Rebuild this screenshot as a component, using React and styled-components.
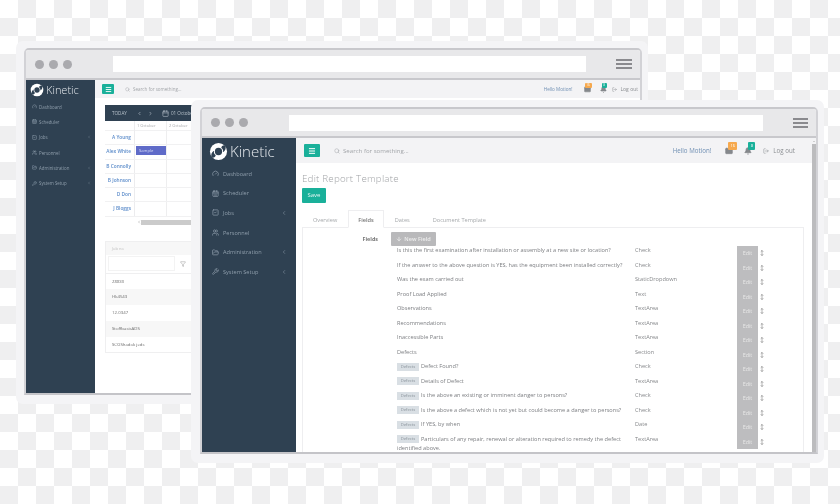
import React from 'react';
import styled, { createGlobalStyle } from 'styled-components';
import {
  Gauge, CalendarDays, SquareCheck, Users, FolderOpen, Wrench, ChevronLeft, ChevronRight,
  Search, Menu, Mail, Bell, LogOut, MoveVertical, ArrowDown, Filter, Calendar
} from 'lucide-react';

const GlobalStyle = createGlobalStyle`
  html, body { margin: 0; padding: 0; background: #fff; }
  body { font-family: "Open Sans", "Liberation Sans", sans-serif; }
`;

const Desktop = styled.div`
  position: relative;
  width: 840px;
  height: 504px;
  overflow: hidden;
  background-color: #fff;
  background-image: conic-gradient(#efeff0 25%, #fff 0 50%, #efeff0 0 75%, #fff 0);
  background-size: 36px 36px;
  filter: blur(0.45px);
`;

const Frame = styled.div`
  position: absolute;
  left: ${p => p.$left}px;
  top: ${p => p.$top}px;
  width: ${p => p.$width}px;
  height: ${p => p.$height}px;
  box-sizing: border-box;
  padding: 7px 6px 9px ${p => p.$padLeft}px;
  background: #f4f4f6;
  border-radius: 7px;
`;

const Chrome = styled.div`
  height: 100%;
  box-sizing: border-box;
  display: flex;
  flex-direction: column;
  border: 2px solid #d2d2d6;
  border-top-color: #c8c8cc;
  border-bottom-color: #c4c4c8;
  border-radius: 5px 5px 0 0;
  overflow: hidden;
  background: #fff;
`;

const TitleBar = styled.div`
  flex: 0 0 ${p => p.$height}px;
  box-sizing: border-box;
  display: flex;
  align-items: center;
  padding: 0 8px 0 ${p => p.$padLeft}px;
  background: #e8e8ea;
  border-bottom: 2px solid #c8c8cc;
`;

const Dots = styled.div`
  display: flex;
  gap: ${p => p.$gap}px;
  width: ${p => p.$width}px;
`;

const Dot = styled.span`
  width: ${p => p.$size}px;
  height: ${p => p.$size}px;
  border-radius: 50%;
  background: #aaaaae;
`;

const UrlBar = styled.div`
  width: ${p => p.$width}px;
  height: 16px;
  background: #fff;
`;

const Burger = styled.div`
  margin-left: ${p => p.$gap}px;
  width: ${p => p.$width}px;
  display: flex;
  flex-direction: column;
  gap: ${p => p.$lineGap}px;
  span { display: block; height: 2px; background: #8a8a8e; }
`;

const AppBody = styled.div`
  flex: 1;
  min-height: 0;
  display: flex;
`;

const Sidebar = styled.nav`
  flex: 0 0 ${p => p.$width}px;
  background: #2f4152;
`;

const Brand = styled.div`
  height: ${p => p.$height}px;
  display: flex;
  align-items: center;
  padding-left: ${p => p.$padLeft}px;
  gap: ${p => p.$gap}px;
  color: #e4e8ec;
  font-family: "Open Sans", sans-serif;
  font-weight: 300;
  font-size: ${p => p.$font}px;
`;

const NavItem = styled.div`
  height: ${p => p.$height}px;
  display: flex;
  align-items: center;
  padding: 0 ${p => p.$padRight}px 0 ${p => p.$padLeft}px;
  gap: ${p => p.$gap}px;
  color: #8f9eac;
  font-size: ${p => p.$font}px;
  span { flex: 1; }
`;

const Main = styled.div`
  flex: 1;
  min-width: 0;
  display: flex;
  flex-direction: column;
  position: relative;
`;

const TopBar = styled.div`
  flex: 0 0 ${p => p.$height}px;
  box-sizing: border-box;
  display: flex;
  align-items: center;
  padding: 0 ${p => p.$padRight}px 0 ${p => p.$padLeft}px;
  background: #f3f3f5;
`;

const Toggle = styled.div`
  width: ${p => p.$width}px;
  height: ${p => p.$height}px;
  display: flex;
  align-items: center;
  justify-content: center;
  background: #1ab09a;
  color: #fff;
  border-radius: 1px;
`;

const SearchBox = styled.div`
  margin-left: ${p => p.$gap}px;
  flex: 1;
  display: flex;
  align-items: center;
  gap: 3px;
  color: #a3a6aa;
  font-size: ${p => p.$font}px;
`;

const Hello = styled.span`
  color: #6f8fb3;
  font-size: ${p => p.$font}px;
`;

const IconBadge = styled.span`
  position: relative;
  display: inline-flex;
  margin-left: ${p => p.$gap}px;
  color: #85888c;
`;

const Badge = styled.span`
  position: absolute;
  left: ${p => p.$left}px;
  top: ${p => p.$top}px;
  min-width: ${p => p.$width}px;
  height: ${p => p.$height}px;
  display: flex;
  align-items: center;
  justify-content: center;
  border-radius: 1px;
  background: ${p => p.$color};
  color: #fff;
  font-size: ${p => p.$font}px;
`;

const LogOutLink = styled.span`
  margin-left: ${p => p.$gap}px;
  display: inline-flex;
  align-items: center;
  gap: ${p => p.$inner}px;
  color: #8b8e92;
  font-size: ${p => p.$font}px;
  white-space: nowrap;
`;

/* back window */
const CalendarWrap = styled.div`
  padding: 7px 0 0 10px;
  width: 300px;
`;

const CalendarBar = styled.div`
  height: 16px;
  display: flex;
  align-items: center;
  padding-left: 7px;
  background: #2f4152;
  color: #b6c0ca;
  font-size: 4.6px;
  white-space: nowrap;
`;

const BarArrows = styled.span`
  margin: 0 0 0 10px;
  display: inline-flex;
  align-items: center;
  gap: 6px;
`;

const CalendarDate = styled.span`
  margin-left: 9px;
  display: inline-flex;
  align-items: center;
  gap: 2px;
`;

const CalRow = styled.div`
  display: grid;
  grid-template-columns: 30px 32px 32px;
  box-sizing: border-box;
  height: ${p => p.$height}px;
  border-bottom: 1px solid #f1f1f2;
`;

const Person = styled.div`
  padding-right: 3px;
  text-align: right;
  color: #5c8cca;
  font-size: 4.8px;
  font-weight: 600;
  line-height: 13px;
  white-space: nowrap;
  border-right: 1px solid #ececee;
  direction: rtl;
`;

const CalCell = styled.div`
  border-right: 1px solid #eeeeef;
  color: #a5a7aa;
  font-size: 4px;
  line-height: 10px;
  padding-left: 2px;
  white-space: nowrap;
  position: relative;
`;

const EventBar = styled.div`
  position: absolute;
  left: 1px;
  right: 0;
  top: 1px;
  height: 9px;
  background: #5f6bc8;
  color: #d7dbf5;
  font-size: 4.2px;
  line-height: 9px;
  padding-left: 3px;
`;

const HScroll = styled.div`
  margin: 3px 0 0 32px;
  display: flex;
  align-items: center;
  color: #9a9a9a;
  div { width: 60px; height: 5px; background: #cbcbcb; }
`;

const JobTable = styled.div`
  margin-top: 16px;
  border: 1px solid #efeff0;
  border-right: none;
`;

const JobHead = styled.div`
  height: 13px;
  padding-left: 6px;
  background: #f7f7f7;
  color: #c0c0c0;
  font-size: 4px;
  line-height: 13px;
`;

const JobFilter = styled.div`
  height: 19px;
  box-sizing: border-box;
  display: flex;
  align-items: center;
  padding-left: 2px;
  gap: 5px;
  color: #999;
  border-bottom: 1px solid #efeff0;
  div { width: 67px; height: 15px; background: #fff; border: 1px solid #f3f3f3; box-sizing: border-box; }
`;

const JobRow = styled.div`
  height: 15.7px;
  padding-left: 6px;
  background: ${p => (p.$striped ? '#f7f7f7' : '#fff')};
  color: #6c6c6c;
  font-size: 4.3px;
  line-height: 15.7px;
`;

/* front window */
const Content = styled.div`
  flex: 1;
  min-height: 0;
  padding: 0 8px 0 6px;
  margin-right: 4px;
  overflow: hidden;
`;

const PageTitle = styled.h2`
  margin: 8px 0 2px;
  color: #a2a4a7;
  font-size: 9.8px;
  font-weight: 300;
  line-height: 15px;
  letter-spacing: 0.2px;
`;

const SaveButton = styled.div`
  width: 24px;
  height: 15px;
  background: #1ab09a;
  color: #e4f6f3;
  font-size: 6px;
  line-height: 15px;
  text-align: center;
  border-radius: 1px;
`;

const Tabs = styled.div`
  margin-top: 6px;
  display: flex;
  align-items: flex-end;
  height: 18px;
  padding-left: 3px;
  font-size: 5.6px;
  color: #a5a8ab;
`;

const Tab = styled.div`
  height: 18px;
  box-sizing: border-box;
  margin-right: ${p => p.$gap}px;
  padding: 0 ${p => p.$pad}px;
  line-height: 18px;
  white-space: nowrap;
  position: relative;
  top: 1px;
  color: ${p => (p.$active ? '#777' : '#a5a8ab')};
  background: ${p => (p.$active ? '#fff' : 'transparent')};
  border: 1px solid ${p => (p.$active ? '#eeeef0' : 'transparent')};
  border-bottom-color: ${p => (p.$active ? '#fff' : 'transparent')};
  font-weight: ${p => (p.$active ? 600 : 400)};
`;

const Panel = styled.div`
  border: 1px solid #eeeef0;
  border-bottom: none;
  height: 230px;
`;

const FieldsHead = styled.div`
  height: 18px;
  display: flex;
  align-items: center;
  padding-top: 4px;
  box-sizing: border-box;
`;

const FieldsLabel = styled.div`
  width: 75px;
  text-align: right;
  color: #777;
  font-size: 5.4px;
  font-weight: 700;
`;

const NewField = styled.div`
  margin-left: 13px;
  width: 45px;
  height: 14px;
  display: flex;
  align-items: center;
  justify-content: center;
  gap: 2px;
  background: #b9b9bb;
  color: #eee;
  font-size: 5.6px;
  font-weight: 600;
  border-radius: 1px;
`;

const FieldList = styled.div`
  padding-left: 94px;
`;

const FieldRow = styled.div`
  display: grid;
  grid-template-columns: 238px 102px 21px 8px;
  height: 14.5px;
`;

const FieldLabel = styled.div`
  color: #7c7e82;
  font-size: 5.6px;
  line-height: 9px;
  white-space: nowrap;
`;

const FieldType = styled.div`
  color: #85878a;
  font-size: 5.6px;
  line-height: 9px;
`;

const DefectTag = styled.span`
  display: inline-block;
  width: 22px;
  height: 8px;
  margin: 0.5px 2px 0 0;
  background: #d9dfe4;
  color: #8b949c;
  font-size: 4.2px;
  line-height: 8px;
  text-align: center;
  vertical-align: top;
`;

const EditButton = styled.div`
  height: 14.5px;
  background: #bdbdbf;
  color: #e8e8e8;
  font-size: 5.4px;
  line-height: 14.5px;
  text-align: center;
`;

const Sorter = styled.div`
  display: flex;
  justify-content: center;
  align-items: center;
  color: #808080;
  height: 14.5px;
`;

const Scrollbar = styled.div`
  position: absolute;
  right: 0;
  top: 6px;
  bottom: 0;
  width: 4px;
  background: #bcbcbe;

  &::before {
    content: "";
    position: absolute;
    left: 0.5px;
    top: -4px;
    border: 1.5px solid transparent;
    border-bottom-color: #aaa;
  }
`;

const Swirl = ({ size }) => (
  <svg width={size} height={size} viewBox="0 0 24 24" fill="none">
    <circle cx="12" cy="12" r="10.8" fill="#fff" />
    <circle cx="12" cy="12" r="4.6" fill="#2f4152" />
    <path d="M20.5 4.500C18 3.600 16 5 15.500 7.400 17.500 8.800 18.300 11 17.600 13 20.500 11.500 22 8 20.500 4.500Z" fill="#2f4152" />
    <path d="M3.500 19.500C6 20.400 8 19 8.500 16.600 6.500 15.200 5.700 13 6.400 11 3.500 12.500 2 16 3.500 19.500Z" fill="#2f4152" />
  </svg>
);

const NAV = [
  ['Dashboard', Gauge, false],
  ['Scheduler', CalendarDays, false],
  ['Jobs', SquareCheck, true],
  ['Personnel', Users, false],
  ['Administration', FolderOpen, true],
  ['System Setup', Wrench, true]
];

const SideNav = ({ w, brandH, brandPad, brandGap, brandFont, logo, item, pad, padRight, gap, font, icon }) => (
  <Sidebar $width={w}>
    <Brand $height={brandH} $padLeft={brandPad} $gap={brandGap} $font={brandFont}>
      <Swirl size={logo} />
      Kinetic
    </Brand>
    {NAV.map(([label, Icon, more]) => (
      <NavItem key={label} $height={item} $padLeft={pad} $padRight={padRight} $gap={gap} $font={font}>
        <Icon size={icon} strokeWidth={2.4} />
        <span>{label}</span>
        {more && <ChevronLeft size={icon - 1} />}
      </NavItem>
    ))}
  </Sidebar>
);

const PEOPLE = ['A Young', 'Alex White', 'B Connolly', 'B Johnson', 'D Don', 'J Bloggs'];
const JOBS = ['28830', 'Hk4543', '12-0347', 'StoffbasisADS', 'SCOShadok jeds'];

const FIELDS = [
  { label: 'Is this the first examination after installation or assembly at a new site or location?', type: 'Check' },
  { label: 'If the answer to the above question is YES, has the equipment been installed correctly?', type: 'Check' },
  { label: 'Was the exam carried out', type: 'StaticDropdown' },
  { label: 'Proof Load Applied', type: 'Text' },
  { label: 'Observations', type: 'TextArea' },
  { label: 'Recommendations', type: 'TextArea' },
  { label: 'Inaccessible Parts', type: 'TextArea' },
  { label: 'Defects', type: 'Section' },
  { label: 'Defect Found?', type: 'Check', tag: true },
  { label: 'Details of Defect', type: 'TextArea', tag: true },
  { label: 'Is the above an existing or imminent danger to persons?', type: 'Check', tag: true },
  { label: 'Is the above a defect which is not yet but could become a danger to persons?', type: 'Check', tag: true },
  { label: 'If YES, by when', type: 'Date', tag: true },
  {
    label: 'Particulars of any repair, renewal or alteration required to remedy the defect',
    more: 'identified above.',
    type: 'TextArea',
    tag: true
  }
];

const BackWindow = () => (
  <Frame $left={16} $top={41} $width={632} $height={363} $padLeft={8}>
    <Chrome>
      <TitleBar $height={30} $padLeft={9}>
        <Dots $gap={5} $width={78}>
          <Dot $size={9} /><Dot $size={9} /><Dot $size={9} />
        </Dots>
        <UrlBar $width={473} />
        <Burger $gap={30} $width={16} $lineGap={2}><span /><span /><span /></Burger>
      </TitleBar>
      <AppBody>
        <SideNav w={69} brandH={19} brandPad={4} brandGap={2} brandFont={11} logo={14}
          item={15.3} pad={6} padRight={4} gap={2} font={4.4} icon={5} />
        <Main>
          <TopBar $height={18} $padLeft={7} $padRight={2}>
            <Toggle $width={12} $height={10}><Menu size={7} strokeWidth={3} /></Toggle>
            <SearchBox $gap={11} $font={4.5}><Search size={5} />Search for something...</SearchBox>
            <Hello $font={4.6}>Hello Motion!</Hello>
            <IconBadge $gap={11}>
              <Mail size={7} fill="#85888c" />
              <Badge $left={1} $top={-3} $width={7} $height={5} $color="#f6a94e" $font={3}>16</Badge>
            </IconBadge>
            <IconBadge $gap={9}>
              <Bell size={7} fill="#85888c" />
              <Badge $left={2} $top={-3} $width={5} $height={5} $color="#1ab09a" $font={3}>8</Badge>
            </IconBadge>
            <LogOutLink $gap={5} $inner={4} $font={5}><LogOut size={5} />Log out</LogOutLink>
          </TopBar>
          <CalendarWrap>
            <CalendarBar>
              TODAY
              <BarArrows><ChevronLeft size={5} strokeWidth={3} /><ChevronRight size={5} strokeWidth={3} /></BarArrows>
              <CalendarDate><Calendar size={7} />01 October 2018</CalendarDate>
            </CalendarBar>
            <CalRow $height={10}>
              <Person />
              <CalCell>1 October</CalCell>
              <CalCell>2 October</CalCell>
            </CalRow>
            {PEOPLE.map((name, i) => (
              <CalRow key={name} $height={14.3}>
                <Person>{name}</Person>
                <CalCell>{i === 1 && <EventBar>Sample</EventBar>}</CalCell>
                <CalCell />
              </CalRow>
            ))}
            <HScroll><ChevronLeft size={4} strokeWidth={3} /><div /></HScroll>
            <JobTable>
              <JobHead>Job no</JobHead>
              <JobFilter><div /><Filter size={6} /></JobFilter>
              {JOBS.map((job, i) => <JobRow key={job} $striped={i % 2 === 1}>{job}</JobRow>)}
            </JobTable>
          </CalendarWrap>
        </Main>
      </AppBody>
    </Chrome>
  </Frame>
);

const FrontWindow = () => (
  <Frame $left={191} $top={100} $width={633} $height={363} $padLeft={9}>
    <Chrome>
      <TitleBar $height={29} $padLeft={9}>
        <Dots $gap={5} $width={78}>
          <Dot $size={9} /><Dot $size={9} /><Dot $size={9} />
        </Dots>
        <UrlBar $width={474} />
        <Burger $gap={30} $width={15} $lineGap={2}><span /><span /><span /></Burger>
      </TitleBar>
      <AppBody>
        <SideNav w={94} brandH={26} brandPad={7} brandGap={2} brandFont={15} logo={19}
          item={19.6} pad={10} padRight={9} gap={4} font={5.6} icon={7} />
        <Main>
          <TopBar $height={25} $padLeft={8} $padRight={21}>
            <Toggle $width={16} $height={13}><Menu size={8} strokeWidth={3} /></Toggle>
            <SearchBox $gap={14} $font={6.1}><Search size={6} />Search for something...</SearchBox>
            <Hello $font={6.2}>Hello Motion!</Hello>
            <IconBadge $gap={14}>
              <Mail size={8} fill="#85888c" />
              <Badge $left={3} $top={-5} $width={9} $height={8} $color="#f6a94e" $font={4}>16</Badge>
            </IconBadge>
            <IconBadge $gap={11}>
              <Bell size={8} fill="#85888c" />
              <Badge $left={4} $top={-5} $width={7} $height={8} $color="#1ab09a" $font={4}>8</Badge>
            </IconBadge>
            <LogOutLink $gap={11} $inner={4} $font={6.2}><LogOut size={6} />Log out</LogOutLink>
          </TopBar>
          <Content>
            <PageTitle>Edit Report Template</PageTitle>
            <SaveButton>Save</SaveButton>
            <Tabs>
              <Tab $pad={7} $gap={3}>Overview</Tab>
              <Tab $active $pad={9} $gap={3}>Fields</Tab>
              <Tab $pad={7} $gap={7}>Dates</Tab>
              <Tab $pad={7} $gap={0}>Document Template</Tab>
            </Tabs>
            <Panel>
              <FieldsHead>
                <FieldsLabel>Fields</FieldsLabel>
                <NewField><ArrowDown size={6} strokeWidth={3} />New Field</NewField>
              </FieldsHead>
              <FieldList>
                {FIELDS.map(({ label, more, type, tag }) => (
                  <FieldRow key={label}>
                    <FieldLabel>
                      {tag && <DefectTag>Defects</DefectTag>}
                      {label}
                      {more && <><br />{more}</>}
                    </FieldLabel>
                    <FieldType>{type}</FieldType>
                    <EditButton>Edit</EditButton>
                    <Sorter><MoveVertical size={6} strokeWidth={2.4} /></Sorter>
                  </FieldRow>
                ))}
              </FieldList>
            </Panel>
          </Content>
          <Scrollbar />
        </Main>
      </AppBody>
    </Chrome>
  </Frame>
);

export default function App() {
  return (
    <>
      <GlobalStyle />
      <Desktop>
        <BackWindow />
        <FrontWindow />
      </Desktop>
    </>
  );
}
